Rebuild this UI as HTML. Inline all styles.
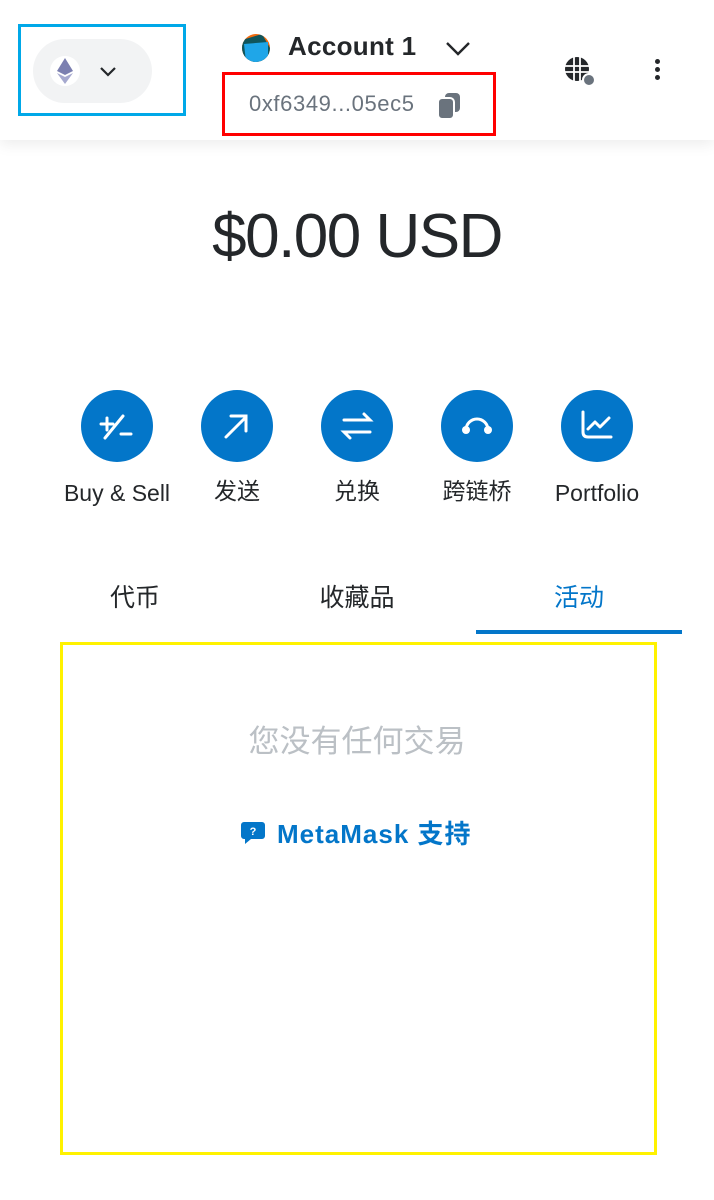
<!DOCTYPE html>
<html><head><meta charset="utf-8"><style>
*{margin:0;padding:0;box-sizing:border-box}
body{width:714px;height:1200px;background:#fff;font-family:"Liberation Sans","Noto Sans CJK SC",sans-serif;position:relative;overflow:hidden;color:#24272a}
.a{position:absolute}
.hdr{left:0;top:0;width:714px;height:140px;background:#fff;box-shadow:0 4px 14px rgba(0,0,0,0.08)}
.circ{width:72px;height:72px;border-radius:50%;background:#0376c9;top:390px}
.lbl{top:476px;font-size:23px;width:140px;text-align:center;line-height:30px}
.tab{top:578px;font-size:25px;width:200px;text-align:center}
</style></head><body>
<div class="a hdr"></div>
<div class="a" style="left:18px;top:24px;width:168px;height:92px;border:3px solid #00a8e8"></div>
<div class="a" style="left:33px;top:39px;width:119px;height:64px;border-radius:32px;background:#f2f3f4"></div>
<div class="a" style="left:50px;top:56px;width:30px;height:30px;border-radius:50%;background:#fff"></div>
<svg class="a" style="left:55px;top:57px" width="20" height="28" viewBox="0 0 20 28"><polygon points="10,1 2,14 10,18 18,14" fill="#7b7fb0"/><polygon points="10,20 2,16 10,27 18,16" fill="#a6a9cf"/></svg>
<svg class="a" style="left:98px;top:64px" width="20" height="14" viewBox="0 0 20 14"><path d="M3 4l7 7 7-7" stroke="#24272a" stroke-width="2.2" fill="none"/></svg>
<svg class="a" style="left:242px;top:34px" width="28" height="28" viewBox="0 0 28 28"><clipPath id="c"><circle cx="14" cy="14" r="14"/></clipPath><g clip-path="url(#c)"><rect width="28" height="28" fill="#f26b0f"/><polygon points="0,6 20,0 28,14 28,28 0,28" fill="#10555b"/><polygon points="2,10 26,8 26,28 4,28" fill="#1fa6e8"/></g></svg>
<div class="a" style="left:288px;top:31px;font-size:26px;font-weight:bold;letter-spacing:0.3px">Account 1</div>
<svg class="a" style="left:444px;top:38px" width="28" height="20" viewBox="0 0 28 20"><path d="M3 5l11 11 11-11" stroke="#24272a" stroke-width="2.4" fill="none"/></svg>
<div class="a" style="left:222px;top:72px;width:274px;height:64px;border:3px solid #ff0000"></div>
<div class="a" style="left:249px;top:91px;font-size:22px;color:#6a737d;letter-spacing:0.6px">0xf6349...05ec5</div>
<svg class="a" style="left:436px;top:92px" width="26" height="28" viewBox="0 0 26 28"><rect x="9" y="1" width="15" height="19" rx="4" fill="#6a737d"/><rect x="2" y="6" width="16" height="21" rx="4" fill="#6a737d" stroke="#fff" stroke-width="2"/></svg>
<svg class="a" style="left:562px;top:54px" width="36" height="34" viewBox="0 0 36 34"><circle cx="15" cy="15" r="12" fill="#24272a"/><path d="M3 12h24M3 18h24M12 3v24M18 3v24" stroke="#fff" stroke-width="1.8" fill="none"/><circle cx="27" cy="26" r="6" fill="#6a737d" stroke="#fff" stroke-width="2"/></svg>
<div class="a" style="left:655px;top:59px;width:5px;height:5px;border-radius:50%;background:#24272a;box-shadow:0 8px 0 #24272a,0 16px 0 #24272a"></div>
<div class="a" style="left:0;top:201px;width:714px;text-align:center;font-size:62px;letter-spacing:-1.5px">$0.00 USD</div>
<div class="a circ" style="left:81px"></div>
<svg class="a" style="left:81px;top:390px" width="72" height="72" viewBox="0 0 72 72" stroke="#fff" stroke-width="3" fill="none" stroke-linecap="round"><path d="M20 34h12M26 28v12M24 48l18-22M40 44h10"/></svg>
<div class="a circ" style="left:201px"></div>
<svg class="a" style="left:201px;top:390px" width="72" height="72" viewBox="0 0 72 72" stroke="#fff" stroke-width="3" fill="none" stroke-linecap="round"><path d="M25 47l20-20M30 26h15v15"/></svg>
<div class="a circ" style="left:321px"></div>
<svg class="a" style="left:321px;top:390px" width="72" height="72" viewBox="0 0 72 72" stroke="#fff" stroke-width="3" fill="none" stroke-linecap="round"><path d="M23 30h26l-6-6M49 42h-26l6 6"/></svg>
<div class="a circ" style="left:441px"></div>
<svg class="a" style="left:441px;top:390px" width="72" height="72" viewBox="0 0 72 72"><path d="M25 40a11 11 0 0 1 22 0" stroke="#fff" stroke-width="3" fill="none"/><circle cx="25" cy="40" r="4" fill="#fff"/><circle cx="47" cy="40" r="4" fill="#fff"/></svg>
<div class="a circ" style="left:561px"></div>
<svg class="a" style="left:561px;top:390px" width="72" height="72" viewBox="0 0 72 72" stroke="#fff" stroke-width="3" fill="none" stroke-linecap="round" stroke-linejoin="round"><path d="M22 22v20q0 5 5 5h23M27 39l7-7 5 5 9-9"/></svg>
<div class="a lbl" style="left:47px;top:478px">Buy &amp; Sell</div>
<div class="a lbl" style="left:167px">发送</div>
<div class="a lbl" style="left:287px">兑换</div>
<div class="a lbl" style="left:407px">跨链桥</div>
<div class="a lbl" style="left:527px;top:478px">Portfolio</div>
<div class="a tab" style="left:35px">代币</div>
<div class="a tab" style="left:257px">收藏品</div>
<div class="a tab" style="left:479px;color:#0376c9">活动</div>
<div class="a" style="left:476px;top:630px;width:206px;height:4px;background:#0376c9"></div>
<div class="a" style="left:60px;top:642px;width:597px;height:513px;border:3px solid #fff200"></div>
<div class="a" style="left:0;top:716px;width:714px;text-align:center;font-size:31px;color:#bbc0c5">您没有任何交易</div>
<svg class="a" style="left:240px;top:820px" width="26" height="26" viewBox="0 0 26 26"><path d="M4 2h18a3 3 0 0 1 3 3v11a3 3 0 0 1-3 3H11l-6 5v-5H4a3 3 0 0 1-3-3V5a3 3 0 0 1 3-3z" fill="#0376c9"/><text x="13" y="15" font-size="11" font-weight="bold" fill="#fff" text-anchor="middle" font-family="Liberation Sans">?</text></svg>
<div class="a" style="left:277px;top:814px;font-size:26px;color:#0376c9;font-weight:bold;letter-spacing:1px">MetaMask 支持</div>
</body></html>
